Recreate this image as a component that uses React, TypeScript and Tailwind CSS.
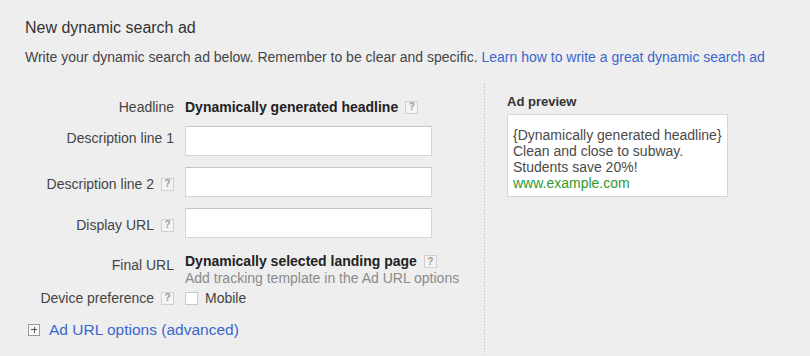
import React from "react";

function Help() {
  return (
    <span className="inline-flex items-center justify-center w-[13px] h-[13px] border border-[#d0d0d0] bg-[#f4f4f4] text-[#999999] text-[10px] leading-none font-bold align-middle">
      ?
    </span>
  );
}

function TextInput() {
  return (
    <div className="w-[247px] h-[30px] bg-white border border-[#d6d6d6] border-t-[#c4c4c4]" />
  );
}

export default function App() {
  return (
    <div
      className="w-[810px] h-[356px] bg-[#eeeeee] overflow-hidden text-[#444444]"
      style={{ fontFamily: '"Liberation Sans", Arial, sans-serif' }}
    >
      <div className="pl-[25px] pt-[18px]">
        <div className="text-[16px] leading-[20px] text-[#333333]">New dynamic search ad</div>
        <div className="mt-[10px] text-[14px] leading-[18px] text-[#444444]">
          Write your dynamic search ad below. Remember to be clear and specific.{" "}
          <span className="text-[#3b66cf]">Learn how to write a great dynamic search ad</span>
        </div>
      </div>

      <div className="flex mt-[18px] h-[272px]">
        {/* form column */}
        <div className="w-[484px] pl-[25px] pt-[15px] text-[14px]">
          <div className="grid grid-cols-[149px_1fr] gap-x-[11px]">
            {/* Headline */}
            <div className="text-right leading-[16px]">Headline</div>
            <div className="flex items-center gap-[7px] leading-[16px]">
              <span className="font-bold text-[#222222]">Dynamically generated headline</span>
              <Help />
            </div>

            {/* Description line 1 */}
            <div className="mt-[11px] pt-[4px] text-right leading-[16px]">Description line 1</div>
            <div className="mt-[11px]">
              <TextInput />
            </div>

            {/* Description line 2 */}
            <div className="mt-[11px] pt-[4px] flex justify-end items-center gap-[7px] leading-[16px]">
              <span>Description line 2</span>
              <Help />
            </div>
            <div className="mt-[11px]">
              <TextInput />
            </div>

            {/* Display URL */}
            <div className="mt-[11px] pt-[4px] flex justify-end items-center gap-[7px] leading-[16px]">
              <span>Display URL</span>
              <Help />
            </div>
            <div className="mt-[11px]">
              <TextInput />
            </div>

            {/* Final URL */}
            <div className="mt-[15px] pt-[4px] text-right leading-[16px]">Final URL</div>
            <div className="mt-[15px]">
              <div className="flex items-center gap-[7px] leading-[17px]">
                <span className="font-bold text-[#222222]">Dynamically selected landing page</span>
                <Help />
              </div>
              <div className="leading-[17px] text-[#8a8a8a]">Add tracking template in the Ad URL options</div>
            </div>

            {/* Device preference */}
            <div className="mt-[3px] flex justify-end items-center gap-[7px] leading-[16px]">
              <span>Device preference</span>
              <Help />
            </div>
            <div className="mt-[3px] flex items-center gap-[7px] leading-[16px]">
              <span className="w-[13px] h-[13px] bg-white border border-[#c9c9c9]" />
              <span>Mobile</span>
            </div>
          </div>

          <div className="mt-[15px] ml-[3px] flex items-center gap-[9px]">
            <span className="relative w-[12px] h-[12px] border border-[#9a9a9a] bg-[#f6f6f6]">
              <span className="absolute left-[2px] top-[4px] w-[6px] h-px bg-[#555555]" />
              <span className="absolute left-[4.5px] top-[1.5px] w-px h-[6px] bg-[#555555]" />
            </span>
            <span className="text-[15.5px] leading-[18px] text-[#3b66cf]">Ad URL options (advanced)</span>
          </div>
        </div>

        {/* dotted divider */}
        <div className="w-px h-full bg-[repeating-linear-gradient(to_bottom,#b8b8b8_0px,#b8b8b8_1px,transparent_1px,transparent_3px)]" />

        {/* preview column */}
        <div className="pl-[22px] pt-[10px]">
          <div className="text-[13px] leading-[16px] font-bold text-[#333333]">Ad preview</div>
          <div className="mt-[4px] w-[221px] h-[83px] bg-white border border-[#d6d6d6] pl-[5px] pt-[12px] text-[14px] leading-[16px] text-[#4a4a4a]">
            <div>{"{Dynamically generated headline}"}</div>
            <div>Clean and close to subway.</div>
            <div>Students save 20%!</div>
            <div className="text-[#2f9a2f]">www.example.com</div>
          </div>
        </div>
      </div>
    </div>
  );
}
